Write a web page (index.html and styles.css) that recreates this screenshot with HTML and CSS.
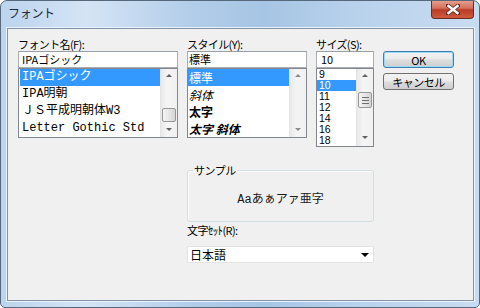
FILE: index.html
```html
<!DOCTYPE html>
<html lang="ja">
<head>
    <meta charset="UTF-8">
    <title>フォント</title>
    <link rel="stylesheet" href="styles.css">
</head>
<body>
    <div class="window">
        <div class="titlebar">
            <span class="title">フォント</span>
            <div class="close">
                <svg width="14" height="11" viewBox="0 0 14 11">
                    <path d="M2 1.5 L12 9.5 M12 1.5 L2 9.5" stroke="#5a2a22" stroke-width="4" stroke-linecap="square"/>
                    <path d="M2.5 2 L11.5 9 M11.5 2 L2.5 9" stroke="#fff" stroke-width="2.4" stroke-linecap="square"/>
                </svg>
            </div>
        </div>

        <div class="client">
            <div class="top">
                <!-- フォント名 -->
                <div class="field">
                    <div class="label">フォント名(F):</div>
                    <div class="input pad3">IPAゴシック</div>
                    <div class="listbox font-list">
                        <ul class="items mono">
                            <li class="sel">IPAゴシック</li>
                            <li>IPA明朝</li>
                            <li>ＪＳ平成明朝体W3</li>
                            <li>Letter Gothic Std</li>
                        </ul>
                        <div class="scrollbar">
                            <div class="arrow up"></div>
                            <div class="track"><div class="thumb"></div></div>
                            <div class="arrow down"></div>
                        </div>
                    </div>
                </div>

                <!-- スタイル -->
                <div class="field">
                    <div class="label">スタイル(Y):</div>
                    <div class="input pad1">標準</div>
                    <div class="listbox style-list">
                        <ul class="items">
                            <li class="sel">標準</li>
                            <li class="it">斜体</li>
                            <li class="bd">太字</li>
                            <li class="bd it">太字 斜体</li>
                        </ul>
                        <div class="scrollbar">
                            <div class="arrow up"></div>
                            <div class="track"></div>
                            <div class="arrow down"></div>
                        </div>
                    </div>
                </div>

                <!-- サイズ -->
                <div class="field">
                    <div class="label">サイズ(S):</div>
                    <div class="input pad4">10</div>
                    <div class="listbox size-list">
                        <ul class="items">
                            <li>9</li>
                            <li class="sel">10</li>
                            <li>11</li>
                            <li>12</li>
                            <li>14</li>
                            <li>16</li>
                            <li>18</li>
                        </ul>
                        <div class="scrollbar">
                            <div class="arrow up"></div>
                            <div class="track">
                                <div class="thumb grip"><span></span><span></span><span></span></div>
                            </div>
                            <div class="arrow down"></div>
                        </div>
                    </div>
                </div>

                <div class="buttons">
                    <button class="btn default">OK</button>
                    <button class="btn">キャンセル</button>
                </div>
            </div>

            <div class="bottom">
                <fieldset class="sample">
                    <legend>サンプル</legend>
                    <div class="sample-text mono">Aaあぁアァ亜字</div>
                </fieldset>
                <div class="label">文字ｾｯﾄ(R):</div>
                <div class="combo">
                    <span>日本語</span>
                    <span class="combo-arrow"></span>
                </div>
            </div>
        </div>
    </div>
</body>
</html>
```

FILE: styles.css
```css
* {
    box-sizing: border-box;
    margin: 0;
    padding: 0;
}

body {
    font-family: "Noto Sans CJK JP", "Noto Sans", sans-serif;
    font-size: 11px;
    color: #000;
    background: #fff;
}

.window {
    width: 480px;
    height: 308px;
    display: flex;
    flex-direction: column;
    border: 1px solid #56687c;
    border-radius: 7px 7px 5px 5px;
    background: linear-gradient(90deg, #bcd4ee 0%, #d4e4f5 18%, #b2cde9 40%, #a6c5e4 55%, #b9d2ec 75%, #c8dcf1 100%);
    overflow: hidden;
}

.titlebar {
    height: 26px;
    display: flex;
    align-items: flex-start;
    padding-left: 7px;
}

.title {
    font-size: 12px;
    line-height: 24px;
    color: #1e2b3a;
    letter-spacing: -0.3px;
}

.close {
    margin-left: auto;
    margin-right: 5px;
    margin-top: -1px;
    width: 43px;
    height: 19px;
    border: 1px solid #6b2a22;
    border-top: none;
    border-radius: 0 0 4px 4px;
    background: linear-gradient(180deg, #e9a394 0%, #d4705c 45%, #bb3b26 55%, #cf5a3e 100%);
    display: flex;
    align-items: center;
    justify-content: center;
}

.client {
    flex: 1;
    margin: 1px 5px 6px 6px;
    border: 1px solid #8394a8;
    box-shadow: 0 0 0 1px #eaf2fb;
    background: #f0f0f0;
    padding: 8px 0 0 10px;
}

.label {
    height: 14px;
    line-height: 14px;
    letter-spacing: -0.6px;
    color: #000;
}

.top {
    display: grid;
    grid-template-columns: 160px 120px 58px 71px;
    column-gap: 9px;
    align-items: start;
}

.input {
    height: 17px;
    line-height: 15px;
    background: #fff;
    border: 1px solid #abadb3;
    border-top-color: #9aa0a8;
    font-size: 11px;
}

.pad1 { padding-left: 1px; }
.pad3 { padding-left: 3px; }
.pad4 { padding-left: 4px; }

.listbox {
    display: flex;
    background: #fff;
    border: 1px solid #828790;
}

.font-list, .style-list {
    height: 70px;
}

.size-list {
    height: 79px;
}

.items {
    list-style: none;
    flex: 1;
    overflow: hidden;
    white-space: nowrap;
}

.font-list .items li {
    height: 17px;
    line-height: 17px;
    padding-left: 2px;
    margin-left: 1px;
}

.style-list .items li {
    height: 17px;
    line-height: 17px;
    font-size: 12px;
    padding-left: 1px;
}

.size-list .items li {
    height: 11px;
    line-height: 11px;
    font-family: "Liberation Sans", sans-serif;
    font-size: 10.5px;
    padding-left: 2px;
}

.items li.sel {
    background: #3399ff;
    color: #fff;
}

.it { font-style: italic; }
.bd { font-weight: bold; }

.mono {
    font-family: "Liberation Mono", "Noto Sans CJK JP", monospace;
    font-size: 12px;
}

.scrollbar {
    width: 17px;
    display: flex;
    flex-direction: column;
    background: linear-gradient(90deg, #e9e9e9 0%, #f5f5f5 40%, #f0f0f0 100%);
    border-left: 1px solid #e3e3e3;
}

.arrow {
    height: 14px;
    position: relative;
}

.arrow::after {
    content: "";
    position: absolute;
    left: 5px;
    top: 5px;
    border-left: 3px solid transparent;
    border-right: 3px solid transparent;
}

.arrow.up::after {
    border-bottom: 3px solid #606060;
}

.arrow.down::after {
    border-top: 3px solid #606060;
}

.style-list .arrow.up::after { border-bottom-color: #8a8a8a; }
.style-list .arrow.down::after { border-top-color: #8a8a8a; }

.track {
    flex: 1;
}

.font-list .track .thumb {
    margin-top: 25px;
    height: 14px;
}

.size-list .arrow {
    height: 15px;
}

.size-list .track .thumb {
    margin-top: 8px;
    height: 16px;
}

.thumb {
    margin-left: 1px;
    width: 14px;
    border: 1px solid #979797;
    border-radius: 2px;
    background: linear-gradient(90deg, #f4f4f4 0%, #e6e6e6 50%, #d4d4d4 100%);
}

.grip {
    display: flex;
    flex-direction: column;
    align-items: center;
    justify-content: center;
    gap: 2px;
}

.grip span {
    width: 7px;
    height: 1px;
    background: #6f6f6f;
}

.buttons {
    margin-top: 14px;
    display: flex;
    flex-direction: column;
    gap: 5px;
}

.btn {
    height: 17px;
    font-family: "Noto Sans CJK JP", "Noto Sans", sans-serif;
    font-size: 11px;
    line-height: 14px;
    letter-spacing: -0.5px;
    color: #000;
    border: 1px solid #707070;
    border-radius: 3px;
    background: linear-gradient(180deg, #f2f2f2 0%, #ebebeb 48%, #dddddd 52%, #cfcfcf 100%);
}

.btn.default {
    border-color: #3c7fb1;
    box-shadow: inset 0 0 0 1px #9ad8f5;
}

.bottom {
    margin-top: 16px;
    margin-left: 169px;
    width: 187px;
}

.sample {
    border: 1px solid #d2dce3;
    border-radius: 3px;
    box-shadow: inset 1px 1px 0 #fff;
    padding: 0 0 14px;
    margin-bottom: 1px;
}

.sample legend {
    margin-left: 5px;
    padding: 0 1px;
    font-size: 11px;
    line-height: 14px;
    letter-spacing: -0.5px;
}

.sample-text {
    margin-top: 16px;
    text-align: center;
    line-height: 14px;
    color: #1b1b1b;
}

.bottom .label {
    margin-bottom: 9px;
}

.combo {
    height: 17px;
    display: flex;
    align-items: center;
    justify-content: space-between;
    padding: 0 4px 0 2px;
    background: #fff;
    border: 1px solid #e3e3e3;
    font-size: 12px;
}

.combo-arrow {
    border-left: 4px solid transparent;
    border-right: 4px solid transparent;
    border-top: 4px solid #000;
}
```
